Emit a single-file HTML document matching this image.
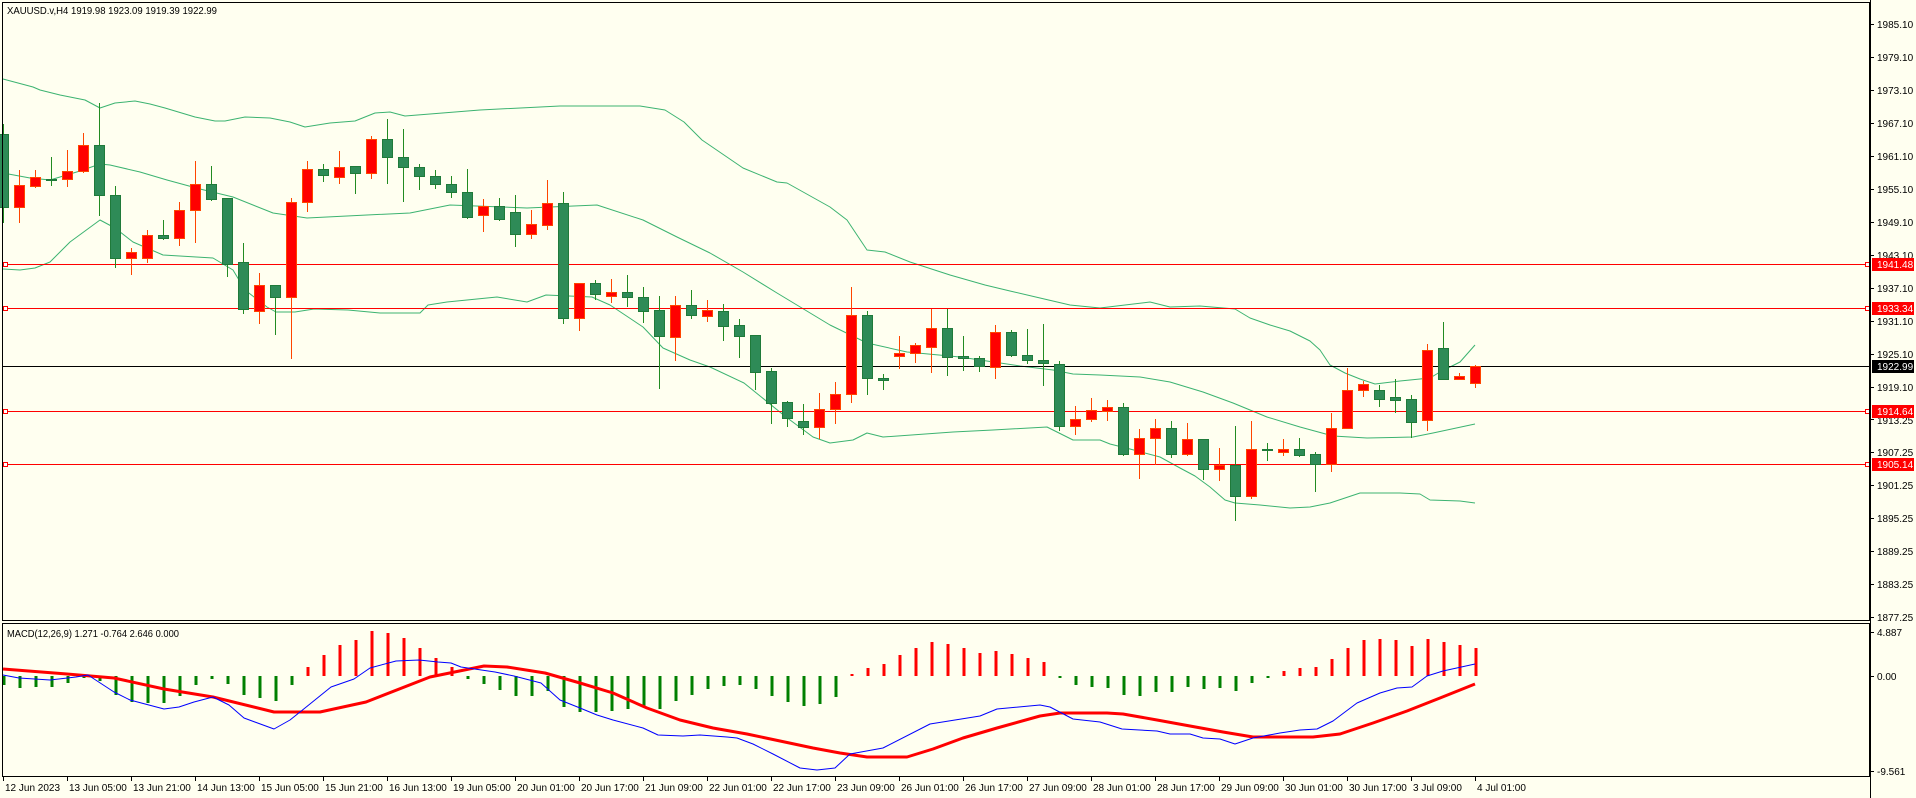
<!DOCTYPE html>
<html><head><meta charset="utf-8"><style>
html,body{margin:0;padding:0;background:#fffff0;overflow:hidden}
svg{display:block}
text{font-family:"Liberation Sans",Arial,sans-serif;font-size:10px;fill:#000}
</style></head><body>
<svg id="s" width="1916" height="798" viewBox="0 0 1916 798" xmlns="http://www.w3.org/2000/svg">
<rect width="1916" height="798" fill="#fffff0"/>
<g id="bands" fill="none" stroke="#3cb371" stroke-width="1"></g>
<g id="hlines" shape-rendering="crispEdges">
<line x1="2" y1="264.5" x2="1870" y2="264.5" stroke="#ff0000"/>
<line x1="2" y1="308.5" x2="1870" y2="308.5" stroke="#ff0000"/>
<line x1="2" y1="411.5" x2="1870" y2="411.5" stroke="#ff0000"/>
<line x1="2" y1="464.5" x2="1870" y2="464.5" stroke="#ff0000"/>
<line x1="2" y1="366.5" x2="1870" y2="366.5" stroke="#000"/>
</g>
<g id="candles" shape-rendering="crispEdges"></g>
<g id="hist" shape-rendering="crispEdges"></g>
<g id="macd" fill="none"></g>
<g fill="#fff" stroke="#ff0000" shape-rendering="crispEdges">
<rect x="3.5" y="262.5" width="4" height="4"/><rect x="3.5" y="306.5" width="4" height="4"/><rect x="3.5" y="409.5" width="4" height="4"/><rect x="3.5" y="462.5" width="4" height="4"/>
<rect x="1865.5" y="262.5" width="4" height="4"/><rect x="1865.5" y="306.5" width="4" height="4"/><rect x="1865.5" y="409.5" width="4" height="4"/><rect x="1865.5" y="462.5" width="4" height="4"/>
</g>
<!-- frames -->
<g fill="none" stroke="#000" shape-rendering="crispEdges">
<rect x="2.5" y="2.5" width="1867" height="618"/>
<rect x="2.5" y="623.5" width="1867" height="153"/>
<line x1="1870.5" y1="0" x2="1870.5" y2="798"/>
</g>
<g id="ticks" stroke="#000" shape-rendering="crispEdges"></g>
<text x="7" y="14" textLength="210" lengthAdjust="spacingAndGlyphs">XAUUSD.v,H4  1919.98 1923.09 1919.39 1922.99</text>
<text x="7" y="637" textLength="172" lengthAdjust="spacingAndGlyphs">MACD(12,26,9) 1.271 -0.764 2.646 0.000</text>
<g>
<text x="1877" y="28">1985.10</text><text x="1877" y="61">1979.10</text><text x="1877" y="94">1973.10</text><text x="1877" y="127">1967.10</text><text x="1877" y="160">1961.10</text><text x="1877" y="193">1955.10</text><text x="1877" y="226">1949.10</text><text x="1877" y="259">1943.10</text><text x="1877" y="292">1937.10</text><text x="1877" y="325">1931.10</text><text x="1877" y="358">1925.10</text><text x="1877" y="391">1919.10</text><text x="1877" y="424">1913.25</text><text x="1877" y="456">1907.25</text><text x="1877" y="489">1901.25</text><text x="1877" y="522">1895.25</text><text x="1877" y="555">1889.25</text><text x="1877" y="588">1883.25</text><text x="1877" y="621">1877.25</text>
<text x="1877" y="636">4.887</text><text x="1877" y="680">0.00</text><text x="1877" y="775">-9.561</text>
</g>
<g shape-rendering="crispEdges">
<rect x="1872" y="258" width="42" height="13" fill="#ff0000"/>
<rect x="1872" y="302" width="42" height="13" fill="#ff0000"/>
<rect x="1872" y="360" width="42" height="13" fill="#000"/>
<rect x="1872" y="405" width="42" height="13" fill="#ff0000"/>
<rect x="1872" y="458" width="42" height="13" fill="#ff0000"/>
</g>
<g style="fill:#fff">
<text x="1877" y="268" style="fill:#fff">1941.48</text>
<text x="1877" y="312" style="fill:#fff">1933.34</text>
<text x="1877" y="370" style="fill:#fff">1922.99</text>
<text x="1877" y="415" style="fill:#fff">1914.64</text>
<text x="1877" y="468" style="fill:#fff">1905.14</text>
</g>
<g>
<text x="5" y="791">12 Jun 2023</text><text x="69" y="791">13 Jun 05:00</text><text x="133" y="791">13 Jun 21:00</text><text x="197" y="791">14 Jun 13:00</text><text x="261" y="791">15 Jun 05:00</text><text x="325" y="791">15 Jun 21:00</text><text x="389" y="791">16 Jun 13:00</text><text x="453" y="791">19 Jun 05:00</text><text x="517" y="791">20 Jun 01:00</text><text x="581" y="791">20 Jun 17:00</text><text x="645" y="791">21 Jun 09:00</text><text x="709" y="791">22 Jun 01:00</text><text x="773" y="791">22 Jun 17:00</text><text x="837" y="791">23 Jun 09:00</text><text x="901" y="791">26 Jun 01:00</text><text x="965" y="791">26 Jun 17:00</text><text x="1029" y="791">27 Jun 09:00</text><text x="1093" y="791">28 Jun 01:00</text><text x="1157" y="791">28 Jun 17:00</text><text x="1221" y="791">29 Jun 09:00</text><text x="1285" y="791">30 Jun 01:00</text><text x="1349" y="791">30 Jun 17:00</text><text x="1413" y="791">3 Jul 09:00</text><text x="1477" y="791">4 Jul 01:00</text>
</g>
</svg>
<script>
var NS="http://www.w3.org/2000/svg";
function el(p,t,a){var e=document.createElementNS(NS,t);for(var k in a)e.setAttribute(k,a[k]);p.appendChild(e);return e;}
var C=[
["g",134,207,124,222],["r",185,207,170,222],["r",177,186,170,187],["g",179,180,157,185],["r",171,179,150,186],["r",145,171,133,172],["g",145,195,103,215],["g",195,258,186,267],["r",252,258,248,274],["r",235,258,230,262],
["g",235,238,220,239],["r",210,238,202,245],["r",184,210,161,242],["g",184,199,166,200],["g",198,264,198,276],["g",262,309,243,313],["r",285,311,273,323],["g",285,297,285,334],["r",202,297,198,358],["r",169,202,161,211],
["g",169,175,164,181],["r",167,177,151,183],["g",166,173,166,193],["r",139,173,136,178],["g",139,157,119,183],["g",157,167,129,201],["g",167,176,164,189],["g",176,184,170,188],["g",184,192,176,197],["g",192,217,169,218],
["r",206,215,199,231],["g",206,219,198,220],["g",212,234,195,246],["r",224,234,210,238],["r",203,225,180,229],["g",203,318,192,323],["r",283,318,283,330],["g",283,294,280,299],["r",292,296,279,302],["g",292,297,275,306],
["g",297,311,287,322],["g",310,336,296,388],["r",305,337,296,360],["g",305,315,290,318],["r",310,316,300,321],["g",311,326,304,340],["g",325,336,319,357],["g",335,372,335,389],["g",371,403,368,423],["g",402,418,401,426],
["g",421,427,404,434],["r",409,427,393,438],["r",394,409,382,423],["r",315,394,287,402],["g",315,378,311,394],["g",378,380,374,389],["r",353,356,336,368],["r",345,353,343,362],["r",328,347,309,372],["g",328,357,309,375],
["g",356,358,336,370],["g",358,366,356,371],["r",332,367,325,378],["g",332,355,330,356],["g",355,360,329,363],["g",360,363,324,385],["g",364,426,361,430],["r",419,426,406,434],["r",410,419,398,421],["r",407,411,400,420],
["g",407,454,403,455],["r",438,454,429,478],["r",428,438,419,464],["g",428,454,421,457],["r",439,454,423,455],["g",439,469,439,479],["r",465,469,448,480],["g",465,496,426,520],["r",449,496,421,498],["g",449,450,443,460],
["r",449,452,439,455],["g",449,455,438,456],["g",454,464,452,491],["r",428,464,413,471],["r",390,428,368,428],["r",384,390,381,396],["g",390,399,385,406],["g",397,400,379,412],["g",399,422,395,437],["r",350,420,344,430],
["g",348,379,322,379],["r",376,379,373,379],["r",366,383,365,387]];
var cg=document.getElementById("candles");
C.forEach(function(c,k){var cx=3+16*k;var g=c[0]=="g";var st=g?"#1f7a3a":"#ff4500";var fi=g?"#2e8b57":"#ff0000";
el(cg,"line",{x1:cx+0.5,y1:c[3],x2:cx+0.5,y2:c[4]+1,stroke:g?"#228b22":"#ff4500"});
var h=Math.max(c[2]-c[1],1);
el(cg,"rect",{x:cx-4.5,y:c[1]+0.5,width:10,height:h,fill:fi,stroke:st});});
var H=[685,688,687,687,683,678,681,695,702,703,703,696,685,679,684,695,698,701,685,667,655,645,640,631,633,638,648,658,667,679,684,690,696,696,691,707,712,712,711,709,707,709,701,695,689,686,685,689,696,702,706,704,697,674,668,664,655,648,642,644,648,653,651,654,658,662,677,685,687,688,695,696,692,692,687,689,688,691,683,677,671,668,667,659,648,640,639,640,646,639,642,645,648];
var hg=document.getElementById("hist");var Z=676;
H.forEach(function(v,k){var cx=3+16*k;var up=v<Z;el(hg,"rect",{x:cx-0.5,y:Math.min(v,Z),width:3,height:Math.max(Math.abs(v-Z),2),fill:up?"#ff0000":"#008000"});});
function pl(g,pts,st,w){el(g,"polyline",{points:pts,stroke:st,"stroke-width":w,"stroke-linejoin":"round",fill:"none"});}
var bg=document.getElementById("bands");
pl(bg,"3,79 33,87 40,90 60,95 85,100 100,108 115,103 135,101 150,104 165,108 195,117 215,121 225,121 245,117 270,118 290,122 305,127 330,123 355,121 375,113 390,112 405,116 430,114 480,110 560,106 640,106 665,110 684,122 702,140 743,168 777,182 787,183 830,207 847,220 867,250 885,252 910,262 950,275 985,285 1010,291 1040,298 1070,305 1100,308 1125,305 1150,302 1170,307 1200,306 1235,309 1250,318 1270,325 1290,331 1310,341 1320,350 1330,365 1345,373 1360,379 1375,384 1400,381 1430,378 1440,372 1460,362 1475,345","#3cb371",1);
pl(bg,"3,173 30,178 50,180 80,171 100,164 110,165 140,172 167,180 200,189 233,197 273,213 307,218 367,215 410,213 450,205 527,208 597,205 643,220 677,237 710,253 743,272 777,293 830,325 867,343 907,352 960,357 1020,366 1053,370 1073,374 1100,375 1140,377 1170,382 1203,392 1233,403 1267,417 1300,427 1333,436 1367,438 1413,437 1433,433 1475,424","#3cb371",1);
pl(bg,"3,269 20,270 35,268 50,262 70,242 85,231 100,220 115,228 133,242 163,255 213,258 233,270 245,290 267,307 276,312 295,312 314,309 348,310 380,313 420,313 428,305 447,302 497,297 527,302 546,295 592,297 610,305 643,327 663,348 690,360 710,367 744,383 786,417 813,437 830,443 853,440 867,433 883,437 953,432 993,430 1047,427 1073,440 1100,440 1110,444 1130,449 1160,457 1180,468 1195,476 1210,487 1225,500 1235,503 1260,505 1290,508 1310,507 1330,503 1360,493 1400,493 1420,494 1430,500 1460,501 1475,503","#3cb371",1);
var mg=document.getElementById("macd");
pl(mg,"3,669 67,674 114,678 164,689 213,697 274,712 320,712 366,702 430,677 484,666 507,667 545,673 580,683 613,693 647,708 680,720 713,728 747,734 780,741 813,748 840,753 867,757 907,757 933,749 963,738 997,728 1040,716 1060,713 1107,713 1123,714 1157,720 1190,726 1223,732 1253,737 1313,737 1340,734 1373,723 1407,711 1440,698 1475,684","#ff0000",3);
pl(mg,"3,675 19,678 50,680 76,677 88,675 114,692 130,700 164,709 179,707 194,702 213,697 229,705 244,718 274,729 290,720 305,708 331,687 354,679 370,668 396,661 419,660 438,662 451,663 461,667 495,672 514,676 541,683 560,700 580,708 597,715 613,720 643,728 658,735 683,736 700,735 727,737 737,738 753,744 773,754 800,768 817,770 835,768 850,754 883,748 930,724 980,716 997,709 1040,705 1050,707 1073,719 1100,722 1122,729 1157,731 1170,734 1190,734 1203,738 1220,739 1235,744 1253,738 1280,733 1300,730 1317,729 1333,721 1357,703 1380,693 1397,688 1412,687 1427,676 1443,671 1475,664","#0000ff",1);
var tg=document.getElementById("ticks");
[24,57,90,123,156,189,222,255,288,321,354,387,419,452,485,518,551,584,617,632,676,771].forEach(function(y){el(tg,"line",{x1:1870,y1:y+0.5,x2:1874,y2:y+0.5});});
for(var i=0;i<24;i++){var x=3+64*i+0.5;el(tg,"line",{x1:x,y1:777,x2:x,y2:781});}
</script>
</body></html>
